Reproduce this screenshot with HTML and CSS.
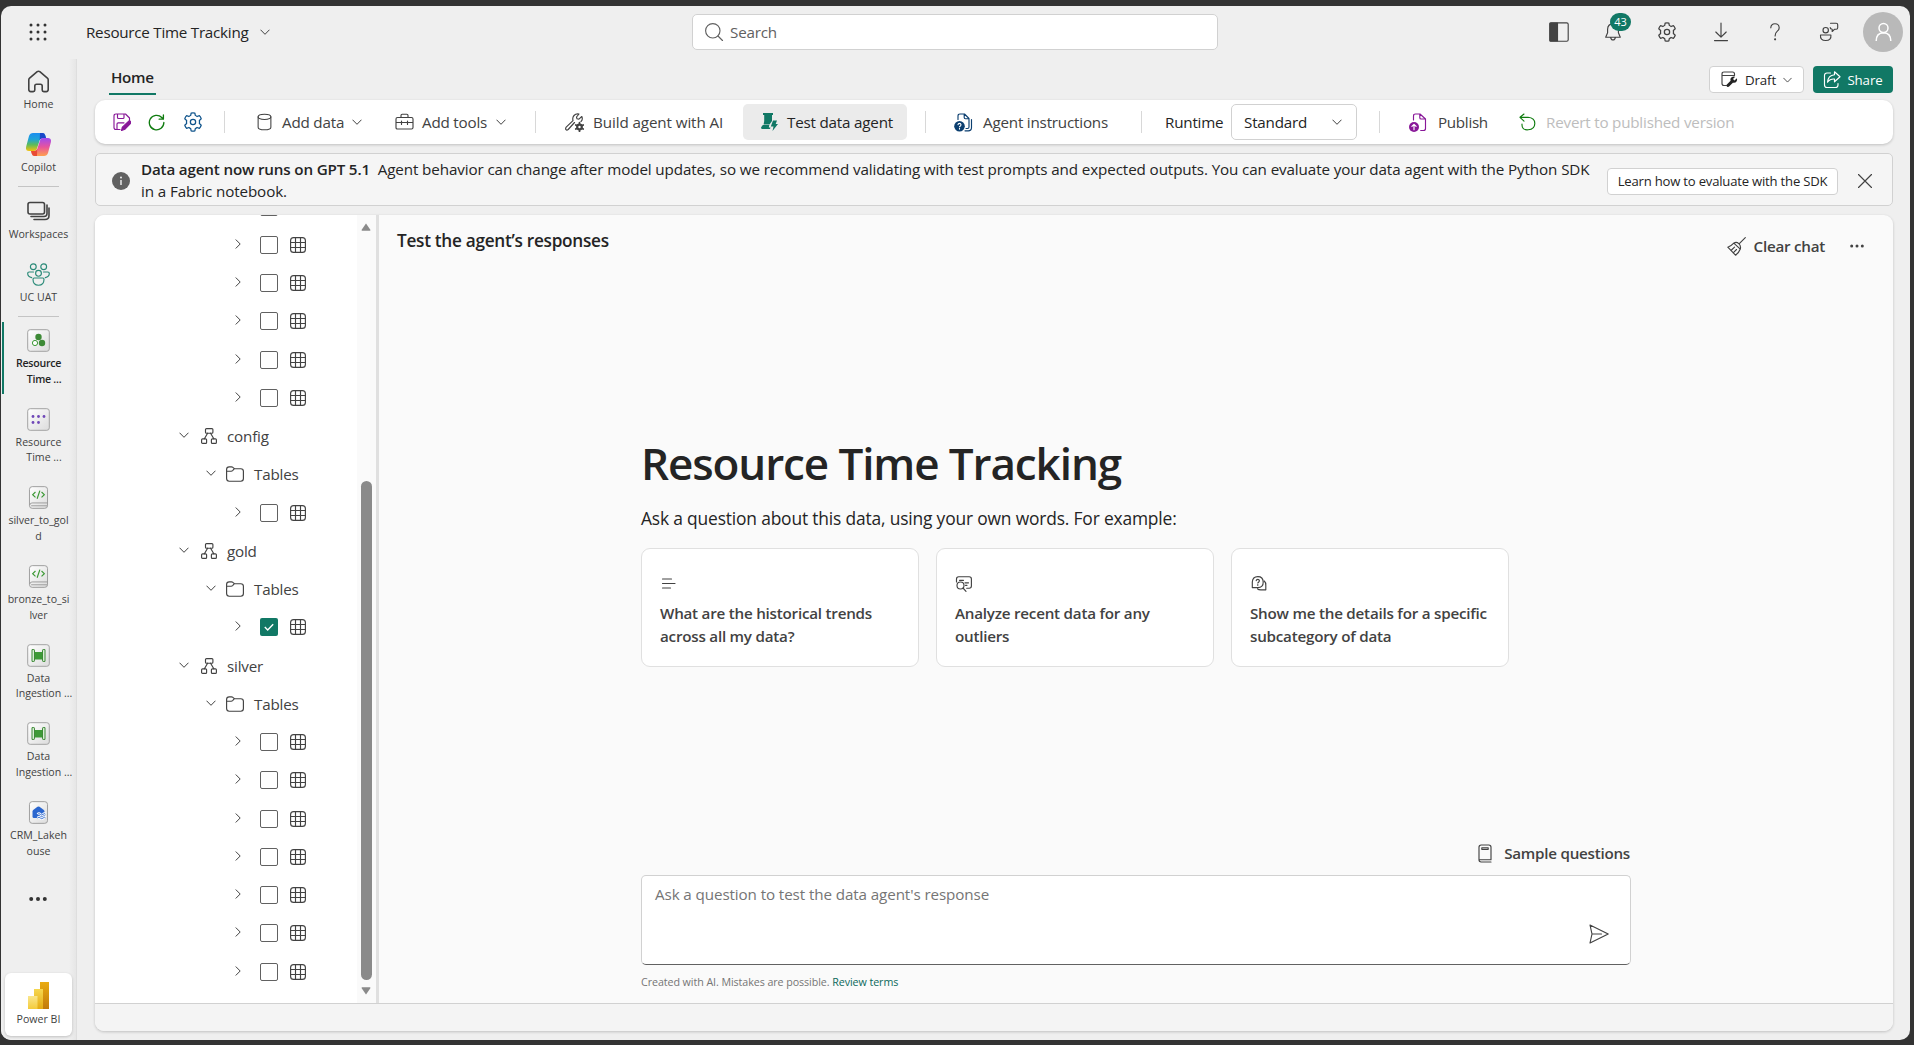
FILE: index.html
```html
<!DOCTYPE html>
<html lang="en">

<head>
    <meta charset="UTF-8">
    <meta name="viewport" content="width=device-width, initial-scale=1.0">
    <title>Resource Time Tracking</title>
    <link rel="stylesheet" href="styles.css">
</head>

<body>
    <!-- icons -->
    <svg width="0" height="0" class="sprite">
        <linearGradient id="gTile" x1="0" y1="0" x2="1" y2="1"><stop offset="0" stop-color="#fff"/><stop offset="1" stop-color="#dcdcdc"/></linearGradient>
        <linearGradient id="gBlue" x1="0" y1="0" x2="0" y2="1"><stop offset="0" stop-color="#1b8df0"/><stop offset=".35" stop-color="#1fa3d8"/><stop offset=".65" stop-color="#5dbb5a"/><stop offset="1" stop-color="#f4c20d"/></linearGradient>
        <linearGradient id="gPink" x1="0" y1="0" x2="0" y2="1"><stop offset="0" stop-color="#a04af0"/><stop offset=".5" stop-color="#e8549c"/><stop offset="1" stop-color="#ffa04d"/></linearGradient>
        <linearGradient id="gBar1" x1="0" y1="0" x2="0" y2="1"><stop offset="0" stop-color="#e9ab12"/><stop offset="1" stop-color="#c27a0c"/></linearGradient>
        <linearGradient id="gBar2" x1="0" y1="0" x2="0" y2="1"><stop offset="0" stop-color="#f6d751"/><stop offset="1" stop-color="#e4aa12"/></linearGradient>
        <linearGradient id="gBar3" x1="0" y1="0" x2="0" y2="1"><stop offset="0" stop-color="#fae68c"/><stop offset="1" stop-color="#f3cb3b"/></linearGradient>
        <symbol id="down" viewBox="0 0 10 10"><path d="M.8 3l4.2 4.3L9.2 3"/></symbol>
        <symbol id="right" viewBox="0 0 10 10"><path d="M3 .8L7.2 5 3 9.2"/></symbol>
        <symbol id="gear" viewBox="0 0 20 20"><path d="M8.3 1.9q1.7-.4 3.4 0l.4 2.2q.9.3 1.6.9l2.1-.8q1.2 1.2 1.7 2.9l-1.7 1.5q.2 1.4 0 2.8l1.7 1.5q-.5 1.7-1.7 2.9l-2.1-.8q-.7.6-1.6.9l-.4 2.2q-1.7.4-3.4 0l-.4-2.2q-.9-.3-1.6-.9l-2.1.8q-1.2-1.2-1.7-2.9l1.700-1.500q-.200-1.400 0-2.800L2.500 7.100q.500-1.700 1.700-2.900l2.100.8q.7-.6 1.600-.9z"/><circle cx="10" cy="10" r="2.400"/></symbol>
        <symbol id="table" viewBox="0 0 16 16"><rect x=".6" y=".6" width="14.800" height="14.800" rx="3"/><path d="M5.500.600v14.800M10.500.600v14.800M.600 5.500h14.800M.600 10.500h14.800"/></symbol>
        <symbol id="schema" viewBox="0 0 16 16"><rect x="4.500" y=".6" width="7.400" height="4.600" rx="1"/><rect x=".6" y="10.800" width="5" height="4.600" rx="1"/><rect x="10.400" y="10.800" width="5" height="4.600" rx="1"/><path d="M6.600 5.200L3.400 10.800M9.600 5.200l3.200 5.600"/></symbol>
        <symbol id="folder" viewBox="0 0 18 16"><path d="M.6 3.400Q.6.800 3.200.8h2.300q.8 0 1.400.6l1.500 1.300h6.400q2.600 0 2.600 2.600v7.300q0 2.600-2.600 2.600H3.200q-2.600 0-2.600-2.600zM.6 5.200h4.500q.9 0 1.500-.6l1.800-1.900"/></symbol>
        <symbol id="tile" viewBox="0 0 23 23"><rect x=".7" y=".7" width="21.600" height="21.600" rx="2.500" fill="url(#gTile)" stroke="#a3a3a3"/></symbol>
        <symbol id="notebook" viewBox="0 0 21 25"><rect x=".7" y=".7" width="19.600" height="23.600" rx="3" fill="url(#gTile)" stroke="#999"/><path d="M1 21q0-2.600 2.500-2.600h16.800M2.500 21.500h17.800" stroke="#999" fill="none"/><path d="M7.200 6.500L4.200 9.400l3 2.900M13.800 6.500l3 2.900-3 2.900M12 5l-3 8.800" fill="none" stroke="#3d9a36" stroke-width="1.300"/></symbol>
        <symbol id="pipeline" viewBox="0 0 23 23"><use href="#tile"/><path d="M7.500 8h8v7.500h-8z" fill="#3d9a36"/><path d="M5 5.600h1.900q.6 0 .6.600v10.600q0 .6-.6.600H5zM18 5.600h-1.900q-.6 0-.6.600v10.600q0 .6.600.6H18z" fill="#d9eed6" stroke="#3d8a36"/></symbol>
    </svg>

    <div class="window">
        <header class="topbar">
            <svg class="waffle" viewBox="0 0 18 18"><g fill="#333"><circle cx="2" cy="2" r="1.500"/><circle cx="9" cy="2" r="1.500"/><circle cx="16" cy="2" r="1.500"/><circle cx="2" cy="9" r="1.500"/><circle cx="9" cy="9" r="1.500"/><circle cx="16" cy="9" r="1.500"/><circle cx="2" cy="16" r="1.500"/><circle cx="9" cy="16" r="1.500"/><circle cx="16" cy="16" r="1.500"/></g></svg>
            <div class="app-name">Resource Time Tracking <svg class="i chev"><use href="#down"/></svg></div>
            <div class="search"><svg class="i s20" viewBox="0 0 20 20"><circle cx="8.800" cy="8.800" r="7.200"/><path d="M14 14l4.500 4.500"/></svg>Search</div>
            <div class="top-icons">
                <span><svg class="i s20" viewBox="0 0 20 20"><rect x=".8" y=".8" width="18.400" height="18.400" rx="1.500"/><path d="M1 1h7.500v18H1z" fill="#424242"/></svg></span>
                <span class="bell"><svg class="i s20" viewBox="0 0 20 20"><path d="M10 1.800q5.200 0 5.400 5.400v3.600l1.900 4.400H2.700l1.900-4.400V7.200Q4.800 1.800 10 1.800zM7.600 15.400q.4 2.600 2.400 2.600t2.400-2.600"/></svg><b>43</b></span>
                <span><svg class="i s22"><use href="#gear"/></svg></span>
                <span><svg class="i s20" viewBox="0 0 20 20"><path d="M10 1v14M4.800 10l5.200 5.200L15.200 10M3.500 18.600h13"/></svg></span>
                <span><svg class="i s20" viewBox="0 0 20 20"><path d="M5.800 5.800Q6 1.700 10 1.700t4.200 4q0 2-2.100 3.700Q10.100 11.100 10.100 14"/><circle cx="10.100" cy="17.300" r=".5" fill="#424242"/></svg></span>
                <span><svg class="i s20" viewBox="0 0 20 20"><circle cx="6.700" cy="8.200" r="2.700"/><path d="M1.500 13h10.400q.6 5.500-5.200 5.500T1.500 13zM11.500 1.200h5.700q1.500 0 1.500 1.500v3q0 1.500-1.500 1.500h-1.500L13.200 9.500V7.200q-1.900 0-2-1.600"/></svg></span>
                <span class="avatar"><svg viewBox="0 0 20 20"><circle cx="10" cy="6" r="4.500"/><path d="M2.700 19q0-8 7.300-8.200Q17.300 11 17.300 19"/></svg></span>
            </div>
        </header>

        <div class="main">
            <nav class="rail">
                <div class="item"><svg class="i thick" viewBox="0 0 23 23"><path d="M1.800 9.800q0-1 .8-1.700l7.600-6.400q1.300-1 2.600 0l7.600 6.400q.8.700.8 1.700v9.800q0 2-2 2h-2.400q-1.600 0-1.600-1.600v-4q0-1.700-1.700-1.700h-4q-1.700 0-1.700 1.700v4q0 1.600-1.600 1.600H3.800q-2 0-2-2z"/></svg><p>Home</p></div>
                <div class="item"><svg class="copilot" viewBox="0 0 25 23"><path d="M7 0h9.500q2 0 2.700 2.200L20 5h-3.500q-2 0-2.700 2l-3 9q-.7 2-2.800 2H3Q-.8 18 .2 13.500L3 3Q4 0 7 0z" fill="url(#gBlue)"/><path d="M14 0h2.500q2 0 2.700 2.200L20.200 5.500h-4q-2 0-2.500 1.500z" fill="#1a48c8"/><path d="M18 23H8.500q-2 0-2.700-2.200L5 18h3.500q2 0 2.700-2l3-9q.7-2 2.800-2h5q3.800 0 2.800 4.500L22 20q-1 3-4 3z" fill="url(#gPink)"/><path d="M11 23H8.500q-2 0-2.700-2.200L5 18h3.500q2 0 2.700-2z" fill="#e94b35"/></svg><p>Copilot</p></div>
                <hr>
                <div class="item"><svg class="i thick" viewBox="0 0 23 23"><rect x="1" y="2.500" width="16.500" height="11.500" rx="2"/><path d="M20 5v8.500q0 3-3 3H4M22 8v7.500q0 4-4 4H7"/></svg><p>Workspaces</p></div>
                <div class="item"><svg class="i team" viewBox="0 0 23 23"><circle cx="6.300" cy="3.700" r="2.900"/><circle cx="16.700" cy="3.700" r="2.900"/><circle cx="11.500" cy="10.300" r="2.900"/><path d="M6.500 9H2.200Q.7 9 .7 10.600q0 3.300 4 4M16.500 9h4.300q1.500 0 1.500 1.600 0 3.300-4 4M6 16.200q0-1.200 1.200-1.200h8.600q1.200 0 1.200 1.200 0 6-5.500 6t-5.500-6z"/></svg><p>UC UAT</p></div>
                <hr>
                <div class="item tall active"><svg viewBox="0 0 23 23"><use href="#tile"/><circle cx="11.500" cy="8" r="3.200" fill="#3d8a36"/><circle cx="15" cy="14" r="3.200" fill="#3d8a36"/><circle cx="8" cy="14" r="2.600" fill="#fff" stroke="#3d9a36"/></svg><p>Resource<br><span>Time ...</span></p></div>
                <div class="item tall"><svg viewBox="0 0 23 23"><use href="#tile"/><g fill="#7048b8"><circle cx="6" cy="8.500" r="1.400"/><circle cx="11.500" cy="8.500" r="1.400"/><circle cx="17" cy="8.500" r="1.400"/><circle cx="6" cy="14.500" r="1.400"/><circle cx="11.500" cy="14.500" r="1.400"/></g></svg><p>Resource<br><span>Time ...</span></p></div>
                <div class="item tall"><svg><use href="#notebook"/></svg><p>silver_to_gol<br>d</p></div>
                <div class="item tall"><svg><use href="#notebook"/></svg><p>bronze_to_si<br>lver</p></div>
                <div class="item tall"><svg><use href="#pipeline"/></svg><p>Data<br><span>Ingestion ...</span></p></div>
                <div class="item tall"><svg><use href="#pipeline"/></svg><p>Data<br><span>Ingestion ...</span></p></div>
                <div class="item tall"><svg viewBox="0 0 21 25"><rect x=".7" y=".7" width="19.600" height="23.600" rx="3" fill="url(#gTile)" stroke="#999"/><path d="M4 11.500q0-1 .7-1.600L9.400 6.300q1.100-.8 2.200 0l4.700 3.600q.7.600.7 1.600v7H5.500Q4 18.500 4 17z" fill="#2a66cf"/><path d="M9.500 14.500q1.500-1.500 3 0t3 0 2.500-.3M9.500 18.500q1.500-1.500 3 0t3 0 2.500-.3" fill="none" stroke="#fff" stroke-width="2.800"/><path d="M9.500 14.500q1.500-1.500 3 0t3 0 2.500-.3M9.500 18.500q1.500-1.500 3 0t3 0 2.500-.3" fill="none" stroke="#2a66cf"/></svg><p>CRM_Lakeh<br>ouse</p></div>
                <svg class="more" viewBox="0 0 18 6"><g fill="#333"><circle cx="2.200" cy="3" r="2"/><circle cx="9" cy="3" r="2"/><circle cx="15.800" cy="3" r="2"/></g></svg>
                <div class="powerbi"><svg viewBox="0 0 21 27"><path d="M12 0h9v27h-9z" fill="url(#gBar1)"/><path d="M6 7h9v20H6z" fill="url(#gBar2)"/><path d="M0 14h9.500v13H0z" fill="url(#gBar3)"/></svg><p>Power BI</p></div>
            </nav>

            <div class="content">
                <div class="tabs">
                    <div class="tab">Home</div>
                    <button class="btn draft"><svg class="i" viewBox="0 0 17 17"><path d="M5.500 14.500H3q-2 0-2-2V3q0-2 2-2h8.500q2 0 2 2v1.500M1 4.500h12.500"/><path d="M15.800 7.300l-2.300 2.200-1.500-1.500 2.200-2.200q-3-.9-4.500 1.400-.6 1.300-.1 2.600l-4 4q-.4 1.400.6 2t1.900-.2l3.800-3.900q2.500.5 3.800-1.400.8-1.500.1-3z" fill="#242424" stroke="none"/></svg>Draft<svg class="i chev"><use href="#down"/></svg></button>
                    <button class="btn share"><svg class="i" viewBox="0 0 18 18"><path d="M7.500 2H4Q1.500 2 1.500 4.500V14q0 2.500 2.500 2.500h8.500Q15 16.500 15 14v-1.500M11.500.8L17 5.800l-5.500 5V8q-4.500-.3-7 3.200Q5 4.300 11.500 3.700z"/></svg>Share</button>
                </div>

                <div class="toolbar">
                    <svg class="i save" viewBox="0 0 18 18"><path d="M7 16.500H3q-2 0-2-2V3q0-2 2-2h9.500L16.500 5v2.500M4.500 1v3.500q0 1 1 1h4.500q1 0 1-1V1M4 16.500V11q0-1.200 1.200-1.200H11"/><path d="M15.500 8.300q1-.8 2 .1t.1 2L12 16.200l-3.500 1.300.9-3.300z" fill="#881798"/></svg>
                    <svg class="i refresh" viewBox="0 0 18 18"><path d="M16.800 9A7.700 7.700 0 1 1 14.600 3.700l1.600 1.600M16.300 1v4.500h-4.500"/></svg>
                    <svg class="i cog"><use href="#gear"/></svg>
                    <i class="sep a"></i>
                    <svg class="i data" viewBox="0 0 16 18"><ellipse cx="8" cy="3.500" rx="6.800" ry="2.800"/><path d="M1.200 3.500v11q0 2.800 6.800 2.800t6.800-2.800v-11"/></svg><span class="t w64">Add data</span><svg class="i chev"><use href="#down"/></svg>
                    <svg class="i tools" viewBox="0 0 19 18"><path d="M6 4.500v-2Q6 1.200 7.200 1.200h4.600Q13 1.200 13 2.500v2M2.500 4.500h14Q18 4.500 18 6v8.500q0 1.500-1.500 1.500h-14Q1 16 1 14.500V6q0-1.500 1.500-1.500zM1 9.500h17M6.500 8v3.500M12.500 8v3.500"/></svg><span class="t w67">Add tools</span><svg class="i chev"><use href="#down"/></svg>
                    <i class="sep b"></i>
                    <svg class="i build" viewBox="0 0 19 19"><path d="M9.500 9.500l-6.300 7Q1.800 17.600 1 16.600T1.200 14.200L8 7.700Q7.200 4.500 9 2.500T14 1L11.500 4l.5 1.800 1.900.4L16.800 3.500q1.300 3-.8 5"/><circle cx="14.500" cy="14" r="2.300" stroke-width="2.200"/><path d="M14.500 9.700v1M14.500 17.300v1M10.800 11.900l.8.500M17.400 15.600l.8.500M10.800 16.100l.8-.5M17.400 12.400l.8-.5" stroke-width="1.800"/></svg><span class="t w131">Build agent with AI</span>
                    <div class="selected"><svg viewBox="0 0 17 18"><path d="M2 0h10v2h-1v6l-2.500 3.500H2.600L3.200 8V2H2zM1.800 12h6.500l-.5 2.500H9.500L9 16H1.500Q-.5 16 .3 14zM12 7.500h4L14.700 11h2.300l-5.500 7 1-4.500H9.800z" fill="#117865"/></svg><span class="t w106">Test data agent</span></div>
                    <i class="sep c"></i>
                    <svg class="i instr" viewBox="0 0 19 19"><path d="M4 6.500V3q0-2 2-2h4.500L15 5.500V14q0 1.500-1.500 1.500H12M10.200 1v3.500q0 1.200 1.200 1.200H15M17.500 6.500v8q0 3.300-3.300 3.300H11"/><circle cx="5.500" cy="13.200" r="5.300" fill="#0c3f70" stroke="none"/><path d="M4 11.700q.2-1.300 1.500-1.300T7 11.700q0 .8-1.500 2M5.500 15.300v.8" stroke="#fff" stroke-width="1.100"/></svg><span class="t w126">Agent instructions</span>
                    <i class="sep d"></i>
                    <span class="t runtime">Runtime</span>
                    <div class="select"><span class="t">Standard</span><svg class="i chev"><use href="#down"/></svg></div>
                    <i class="sep e"></i>
                    <svg class="i publish" viewBox="0 0 18 19"><path d="M4.500 7V3q0-2 2-2H11l5.500 5v9.500q0 2-2 2h-2.800M10.800 1v3.700q0 1.300 1.300 1.300h4.400"/><circle cx="5" cy="14" r="5" fill="#881798" stroke="none"/><path d="M5 16.700v-5M2.900 13.400L5 11.300l2.100 2.100" stroke="#fff"/></svg><span class="t w50">Publish</span>
                    <svg class="i revert" viewBox="0 0 17 18"><path d="M5 1L1 4.300l4 3.800M1.200 4.300H9Q15.800 4.800 15.800 10.500T9.200 16.800 3 11"/></svg><span class="t w189">Revert to published version</span>
                </div>

                <div class="banner">
                    <svg class="info" viewBox="0 0 18 18"><circle cx="9" cy="9" r="9" fill="#616161"/><path d="M9 8v5" stroke="#fff" stroke-width="1.300"/><circle cx="9" cy="5.500" r=".9" fill="#fff"/></svg>
                    <p><b>Data agent now runs on GPT 5.1</b> Agent behavior can change after model updates, so we recommend validating with test prompts and expected outputs. You can evaluate your data agent with the Python SDK<br>in a Fabric notebook.</p>
                    <button class="btn learn">Learn how to evaluate with the SDK</button>
                    <svg class="i close" viewBox="0 0 14 14"><path d="M.5.500l13 13M13.500.500l-13 13"/></svg>
                </div>

                <div class="panel">
                    <div class="panes">
                        <div class="tree">
                            <ul>
                                <li class="leaf"><svg class="i arrow"><use href="#right"/></svg><i class="check"></i><svg class="i table"><use href="#table"/></svg></li>
                                <li class="leaf"><svg class="i arrow"><use href="#right"/></svg><i class="check"></i><svg class="i table"><use href="#table"/></svg></li>
                                <li class="leaf"><svg class="i arrow"><use href="#right"/></svg><i class="check"></i><svg class="i table"><use href="#table"/></svg></li>
                                <li class="leaf"><svg class="i arrow"><use href="#right"/></svg><i class="check"></i><svg class="i table"><use href="#table"/></svg></li>
                                <li class="leaf"><svg class="i arrow"><use href="#right"/></svg><i class="check"></i><svg class="i table"><use href="#table"/></svg></li>
                                <li class="leaf"><svg class="i arrow"><use href="#right"/></svg><i class="check"></i><svg class="i table"><use href="#table"/></svg></li>
                                <li class="schema"><svg class="i arrow"><use href="#down"/></svg><svg class="i net"><use href="#schema"/></svg>config</li>
                                <li class="folder"><svg class="i arrow"><use href="#down"/></svg><svg class="i dir"><use href="#folder"/></svg>Tables</li>
                                <li class="leaf"><svg class="i arrow"><use href="#right"/></svg><i class="check"></i><svg class="i table"><use href="#table"/></svg></li>
                                <li class="schema"><svg class="i arrow"><use href="#down"/></svg><svg class="i net"><use href="#schema"/></svg>gold</li>
                                <li class="folder"><svg class="i arrow"><use href="#down"/></svg><svg class="i dir"><use href="#folder"/></svg>Tables</li>
                                <li class="leaf"><svg class="i arrow"><use href="#right"/></svg><i class="check on"><svg viewBox="0 0 10 8"><path d="M.8 4l2.900 2.900L9.200 1.200"/></svg></i><svg class="i table"><use href="#table"/></svg></li>
                                <li class="schema"><svg class="i arrow"><use href="#down"/></svg><svg class="i net"><use href="#schema"/></svg>silver</li>
                                <li class="folder"><svg class="i arrow"><use href="#down"/></svg><svg class="i dir"><use href="#folder"/></svg>Tables</li>
                                <li class="leaf"><svg class="i arrow"><use href="#right"/></svg><i class="check"></i><svg class="i table"><use href="#table"/></svg></li>
                                <li class="leaf"><svg class="i arrow"><use href="#right"/></svg><i class="check"></i><svg class="i table"><use href="#table"/></svg></li>
                                <li class="leaf"><svg class="i arrow"><use href="#right"/></svg><i class="check"></i><svg class="i table"><use href="#table"/></svg></li>
                                <li class="leaf"><svg class="i arrow"><use href="#right"/></svg><i class="check"></i><svg class="i table"><use href="#table"/></svg></li>
                                <li class="leaf"><svg class="i arrow"><use href="#right"/></svg><i class="check"></i><svg class="i table"><use href="#table"/></svg></li>
                                <li class="leaf"><svg class="i arrow"><use href="#right"/></svg><i class="check"></i><svg class="i table"><use href="#table"/></svg></li>
                                <li class="leaf"><svg class="i arrow"><use href="#right"/></svg><i class="check"></i><svg class="i table"><use href="#table"/></svg></li>
                            </ul>
                            <div class="scroll">
                                <svg viewBox="0 0 10 8"><path d="M5 .500L9.500 7q0 .800-.700.800H1.200Q.500 7.800.500 7z"/></svg>
                                <div class="thumb"></div>
                                <svg viewBox="0 0 10 8"><path d="M5 7.500L9.500 1q0-.800-.700-.800H1.200Q.500.200.500 1z"/></svg>
                            </div>
                        </div>

                        <div class="chat">
                            <div class="chat-head">
                                <h2>Test the agent’s responses</h2>
                                <svg class="i broom" viewBox="0 0 19 19"><path d="M18.300.700l-6 6M6.800 6.200q2.600-1.800 5 .5t1.500 5.300Q11.800 16 8.500 18.200L.800 10.200Q4 9.200 6.800 6.200zM6.800 6.200l6.500 6M4 13.500l3.500-3.300M6.200 15.800l3.300-3.300"/></svg>
                                <span class="clear">Clear chat</span>
                                <svg class="dots" viewBox="0 0 14 4"><g fill="#424242"><circle cx="1.700" cy="2" r="1.500"/><circle cx="7" cy="2" r="1.500"/><circle cx="12.300" cy="2" r="1.500"/></g></svg>
                            </div>

                            <div class="welcome">
                                <h1>Resource Time Tracking</h1>
                                <p class="sub">Ask a question about this data, using your own words. For example:</p>
                                <div class="cards">
                                    <div class="card"><svg class="i" viewBox="0 0 18 18"><path d="M2.500 5h9M2.500 9.500H15M2.500 14h8"/></svg><p>What are the historical trends<br>across all my data?</p></div>
                                    <div class="card"><svg class="i" viewBox="0 0 18 18"><path d="M1.500 8V5Q1.500 2.700 3.700 2.700h10.500q2.200 0 2.200 2.300v7q0 2.200-2.200 2.200h-2.500M4.500 6.300h4M10 8.800h3.500M10.500 11.300h1.500"/><circle cx="5.500" cy="11.500" r="3.500"/><path d="M8 14l3 3.300"/></svg><p>Analyze recent data for any<br>outliers</p></div>
                                    <div class="card"><svg class="i" viewBox="0 0 18 18"><path d="M2.300 13.600V8Q2.600 2.700 7.800 2.600T13.200 8 7.800 13.600zM14.300 7q1.700 1.500 1.500 4.500v4.300h-5Q8.500 15.800 7.500 14.800M6.200 6.700q.2-1.400 1.600-1.400t1.600 1.400q0 .9-1.600 2.300M7.800 10.500v.8"/></svg><p>Show me the details for a specific<br>subcategory of data</p></div>
                                </div>
                            </div>

                            <div class="ask">
                                <div class="sample"><svg class="i" viewBox="0 0 14 19"><path d="M13 15.500V3.200Q13 1 10.800 1H3.200Q1 1 1 3.200v12.600Q1 18 3.200 18H13M1 15.700h12M3.800 3.700h6.400v1.600H3.800z"/></svg>Sample questions</div>
                                <div class="box"><span>Ask a question to test the data agent's response</span><svg class="i send" viewBox="0 0 20 20"><path d="M1 1l18.200 9L1 19l2-9zM3 10h9.500"/></svg></div>
                                <p class="terms">Created with AI. Mistakes are possible. <a>Review terms</a></p>
                            </div>
                        </div>
                    </div>
                    <div class="status"></div>
                </div>
            </div>
        </div>
    </div>
</body>

</html>
```
FILE: styles.css
```css
* {
    box-sizing: border-box;
}

body,
ul,
p,
h1,
h2 {
    margin: 0;
    padding: 0;
}

html {
    height: 1045px;
    overflow: hidden;
}

body {
    width: 1914px;
    height: 1045px;
    padding: 6px 4px 5px 1px;
    background: #333;
    color: #242424;
    font: 15.2px/20px "Open Sans", "Noto Sans", sans-serif;
    white-space: nowrap;
}

svg {
    display: block;
    flex: none;
}

.sprite {
    position: absolute;
}

.i {
    fill: none;
    stroke: #424242;
    stroke-width: 1.15;
    stroke-linejoin: round;
    stroke-linecap: round;
}

.s20 {
    width: 20px;
    height: 20px;
}

.s22 {
    width: 22px;
    height: 22px;
}

.chev {
    width: 10px;
    height: 10px;
    stroke-width: 1;
}

.window {
    display: flex;
    flex-direction: column;
    height: 1034px;
    border-radius: 10px;
    background: #efefef;
    overflow: hidden;
}

/* top bar */
.topbar {
    display: flex;
    align-items: center;
    flex: none;
    height: 53px;
    padding: 0 0 2px 28px;
}

.waffle {
    width: 18px;
    height: 18px;
}

.app-name {
    display: flex;
    align-items: center;
    gap: 12px;
    width: 606px;
    margin-left: 39px;
    letter-spacing: -.25px;
}

.search {
    display: flex;
    align-items: center;
    gap: 6px;
    width: 526px;
    height: 36px;
    padding-left: 11px;
    border: 1px solid #d1d1d1;
    border-radius: 5px;
    background: #fff;
    color: #616161;
    letter-spacing: -.2px;
}

.search svg {
    stroke: #616161;
}

.top-icons {
    display: flex;
    align-items: center;
    margin-left: 314px;
}

.top-icons span {
    position: relative;
    display: flex;
    align-items: center;
    justify-content: center;
    width: 54px;
}

.bell b {
    position: absolute;
    left: 24px;
    top: -9px;
    width: 21px;
    height: 18px;
    border-radius: 9px;
    background: #117865;
    color: #fff;
    font-size: 11px;
    font-weight: 400;
    line-height: 18px;
    text-align: center;
}

.top-icons .avatar {
    width: 40px;
    height: 40px;
    margin-left: 7px;
    border-radius: 50%;
    background: #b9b9b9;
}

.avatar svg {
    width: 21px;
    height: 20px;
    fill: none;
    stroke: #fff;
    stroke-width: 1.5;
}

.main {
    display: flex;
    flex: 1;
    min-height: 0;
}

/* left rail */
.rail {
    display: flex;
    flex-direction: column;
    flex: none;
    width: 76px;
    padding-top: 4px;
    background: linear-gradient(90deg, #efefef 68px, #e6e6e6 75px, #d6d6d6 76px);
}

.item {
    flex: none;
    display: flex;
    flex-direction: column;
    align-items: center;
    height: 63px;
    padding-top: 6px;
    padding-right: 1px;
    color: #424242;
    font-size: 10.6px;
    line-height: 15.7px;
    text-align: center;
}

.item svg {
    width: 25px;
    height: 25px;
    padding: 1px;
    margin-bottom: 3px;
}

.item .copilot {
    padding: 0;
}

.item.tall {
    height: 78.7px;
}

.item span {
    margin-left: 11px;
}

.active {
    position: relative;
    color: #242424;
    font-weight: 600;
    letter-spacing: -.25px;
}

.active::before {
    content: "";
    position: absolute;
    left: 1px;
    top: 0;
    width: 2px;
    height: 72px;
    background: #117865;
}

.thick {
    stroke-width: 1.6;
}

.team {
    stroke: #2a8a78;
}

.rail hr {
    flex: none;
    width: 41px;
    height: 1px;
    margin: -3px 0 5.5px 17px;
    border: 0;
    background: #c4c4c4;
}

.more {
    width: 18px;
    height: 6px;
    margin: 23px 0 0 28px;
}

.powerbi {
    display: flex;
    flex-direction: column;
    align-items: center;
    width: 67px;
    height: 63px;
    margin: auto 0 4px 4px;
    padding-top: 9px;
    border-radius: 6px;
    background: #fff;
    box-shadow: 0 1px 3px #0003;
    color: #424242;
    font-size: 10.6px;
}

.powerbi svg {
    width: 21px;
    height: 27px;
}

/* content */
.content {
    display: flex;
    flex-direction: column;
    width: 1816px;
    padding-left: 18px;
}

.tabs {
    display: flex;
    align-items: flex-start;
    height: 41px;
    padding-top: 7px;
}

.tab {
    height: 29px;
    margin: 0 auto 0 14px;
    padding: 1px 2px 0;
    border-bottom: 2px solid #117865;
    font-weight: 600;
    letter-spacing: -.3px;
}

.btn {
    display: flex;
    align-items: center;
    justify-content: center;
    flex: none;
    height: 27px;
    padding: 0;
    border: 1px solid #d1d1d1;
    border-radius: 4px;
    background: #fff;
    color: #242424;
    font: 13.3px "Open Sans", "Noto Sans", sans-serif;
    letter-spacing: -.1px;
}

.draft {
    width: 95px;
    gap: 7px;
}

.draft svg {
    width: 17px;
    height: 17px;
}

.draft .chev {
    width: 9px;
    height: 10px;
}

.share {
    width: 80px;
    gap: 6px;
    margin-left: 9px;
    border: 0;
    background: #117865;
    color: #fff;
}

.share svg {
    width: 18px;
    height: 18px;
    stroke: #fff;
}

.toolbar {
    display: flex;
    align-items: center;
    flex: none;
    height: 44px;
    padding-left: 18px;
    border-radius: 10px;
    background: #fff;
    box-shadow: 0 1px 3px #0003;
    color: #424242;
}

.t {
    letter-spacing: -.2px;
}

.w64 {
    width: 64px;
    margin: 0 6px 0 10px;
}

.w67 {
    width: 67px;
    margin: 0 7px 0 8px;
}

.w131 {
    width: 131px;
    margin: 0 19px 0 9px;
    letter-spacing: -.1px;
}

.w106 {
    width: 106px;
    color: #242424;
}

.w126 {
    width: 126px;
    margin-left: 10px;
}

.w50 {
    width: 50px;
    margin-left: 11px;
    letter-spacing: -.3px;
}

.w189 {
    margin-left: 10px;
    color: #bdbdbd;
}

.save {
    width: 18px;
    height: 18px;
    stroke: #881798;
}

.refresh {
    width: 17px;
    height: 17px;
    margin: 0 17px;
    stroke: #107c10;
    stroke-width: 1.4;
}

.cog {
    width: 22px;
    height: 22px;
    stroke: #0f548c;
}

.sep {
    flex: none;
    width: 1px;
    height: 22px;
    background: #d8d8d8;
}

.sep.a {
    margin: 0 32px 0 20px;
}

.sep.b {
    margin: 0 29px;
}

.sep.c {
    margin: 0 28px 0 18px;
}

.sep.d {
    margin: 0 23px 0 32px;
}

.sep.e {
    margin: 0 29px 0 22px;
}

.data {
    width: 15px;
    height: 18px;
}

.tools {
    width: 19px;
    height: 18px;
    margin-left: 33px;
}

.build {
    width: 19px;
    height: 19px;
}

.selected {
    display: flex;
    align-items: center;
    gap: 9px;
    width: 164px;
    height: 36px;
    padding-left: 18px;
    border-radius: 5px;
    background: #ebebeb;
}

.selected svg {
    width: 17px;
    height: 18px;
}

.instr {
    width: 19px;
    height: 19px;
    stroke: #0c3f70;
}

.runtime {
    width: 66px;
    color: #242424;
}

.select {
    display: flex;
    align-items: center;
    justify-content: space-between;
    width: 126px;
    height: 36px;
    padding: 0 14px 0 12px;
    border: 1px solid #d1d1d1;
    border-radius: 5px;
    color: #242424;
}

.publish {
    width: 18px;
    height: 19px;
    stroke: #881798;
}

.revert {
    width: 17px;
    height: 18px;
    margin-left: 31px;
    stroke: #107c10;
}

.banner {
    display: flex;
    align-items: center;
    flex: none;
    height: 53px;
    margin: 9px 0;
    padding-left: 16px;
    border: 1px solid #d1d1d1;
    border-radius: 5px;
    background: #f5f5f5;
}

.info {
    width: 18px;
    height: 18px;
    margin: 3px 11px 0 0;
}

.banner p {
    width: 1466px;
    margin-top: 1px;
    line-height: 22px;
    letter-spacing: -.11px;
}

.banner b {
    margin-right: 4px;
    font-weight: 600;
    letter-spacing: -.17px;
}

.learn {
    width: 231px;
    margin-top: 3px;
    font-size: 13.1px;
    letter-spacing: -.2px;
}

.close {
    width: 14px;
    height: 14px;
    margin: 3px 0 0 20px;
}

/* main panel */
.panel {
    display: flex;
    flex-direction: column;
    height: 816px;
    border-radius: 9px;
    background: #fafafa;
    box-shadow: 0 1px 3px #0003;
    overflow: hidden;
}

.panes {
    display: flex;
    height: 788px;
}

.status {
    flex: 1;
    border-top: 1px solid #d1d1d1;
    background: #f4f4f4;
}

.tree {
    display: flex;
    flex: none;
    width: 284px;
    border-right: 3px solid #e0e0e0;
    background: #fff;
    color: #424242;
}

.tree ul {
    width: 262px;
    margin-top: -27.5px;
    list-style: none;
}

.tree li {
    display: flex;
    align-items: center;
    height: 38.26px;
    letter-spacing: -.2px;
}

.leaf {
    padding-left: 138px;
}

.schema {
    padding-left: 84px;
}

.folder {
    padding-left: 111px;
}

.arrow {
    width: 10px;
    height: 10px;
    margin-top: -2px;
    stroke-width: 1;
}

.check {
    display: flex;
    align-items: center;
    justify-content: center;
    width: 18px;
    height: 18px;
    margin: 0 12px 0 17px;
    border: 1px solid #616161;
    border-radius: 2px;
}

.check.on {
    border: 0;
    background: #117865;
}

.check svg {
    width: 10px;
    height: 8px;
    fill: none;
    stroke: #fff;
    stroke-width: 1.4;
}

.table {
    width: 16px;
    height: 16px;
}

.net {
    width: 16px;
    height: 16px;
    margin: 0 10px 0 12px;
}

.dir {
    width: 18px;
    height: 16px;
    margin: 0 10px 0 10px;
}

.scroll {
    display: flex;
    flex-direction: column;
    width: 19px;
    padding: 8px 5px 8px 4px;
    background: #fafafa;
}

.scroll svg {
    width: 10px;
    height: 8px;
    fill: #8a8a8a;
}

.thumb {
    width: 11px;
    height: 499px;
    margin: 250px 0 7px;
    border-radius: 6px;
    background: #8a8a8a;
}

.chat {
    display: flex;
    flex-direction: column;
    flex: 1;
}

.chat-head {
    display: flex;
    align-items: center;
    height: 62px;
    padding: 0 29px 0 18px;
    color: #424242;
    font-weight: 600;
}

.chat-head h2 {
    margin: -10px auto 0 0;
    color: #242424;
    font-size: 17.2px;
    font-weight: 600;
    letter-spacing: -.28px;
}

.broom {
    width: 19px;
    height: 19px;
    margin-right: 8px;
}

.clear {
    letter-spacing: -.25px;
}

.dots {
    width: 14px;
    height: 4px;
    margin-left: 25px;
}

.welcome {
    width: 870px;
    margin: 155px 0 0 262px;
}

.welcome h1 {
    font-size: 44px;
    font-weight: 600;
    line-height: 62px;
    letter-spacing: -1.1px;
}

.sub {
    margin-top: 11px;
    font-size: 17.4px;
    line-height: 26px;
    letter-spacing: -.17px;
}

.cards {
    display: flex;
    gap: 17px;
    margin-top: 17px;
}

.card {
    flex: none;
    width: 278px;
    height: 119px;
    padding: 25px 18px 0;
    border: 1px solid #e0e0e0;
    border-radius: 9px;
    background: #fff;
    color: #424242;
    font-weight: 600;
    line-height: 23px;
    letter-spacing: -.23px;
}

.card svg {
    width: 18px;
    height: 18px;
    margin-bottom: 10px;
}

.ask {
    width: 990px;
    margin: auto 0 11px 262px;
}

.sample {
    display: flex;
    align-items: center;
    justify-content: flex-end;
    gap: 12px;
    margin-bottom: 12px;
    padding-right: 1px;
    color: #424242;
    font-weight: 600;
    letter-spacing: -.25px;
}

.sample svg {
    width: 14px;
    height: 19px;
}

.box {
    display: flex;
    align-items: flex-end;
    justify-content: space-between;
    height: 90px;
    padding: 8px 21px 20px 13px;
    border: 1px solid #d1d1d1;
    border-bottom-color: #616161;
    border-radius: 5px;
    background: #fff;
    color: #757575;
}

.box span {
    align-self: flex-start;
    letter-spacing: -.1px;
}

.send {
    width: 20px;
    height: 20px;
}

.terms {
    margin-top: 7px;
    color: #757575;
    font-size: 10.7px;
    letter-spacing: -.07px;
}

.terms a {
    color: #0c695a;
}
```
